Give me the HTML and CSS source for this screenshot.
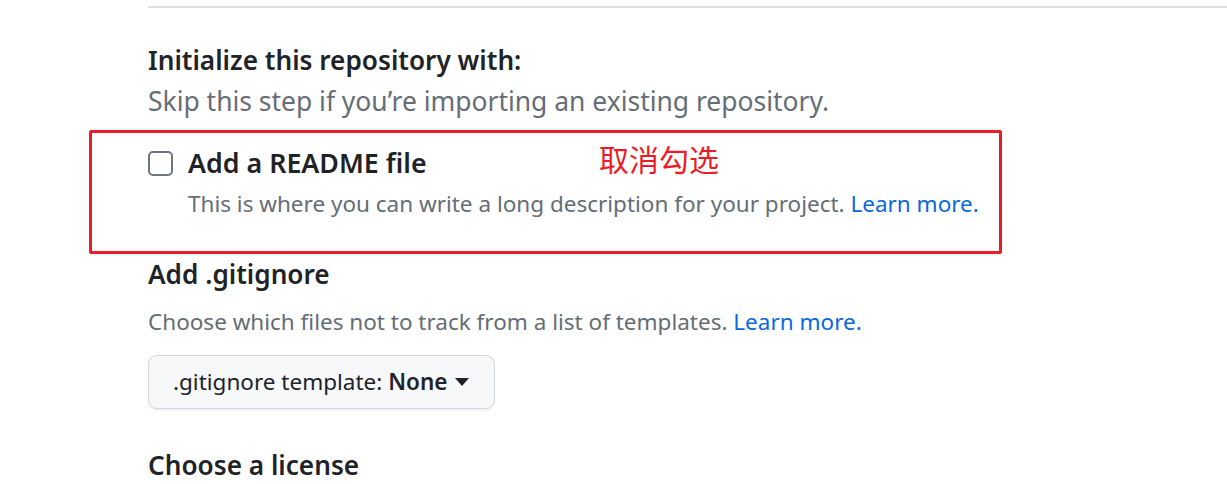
FILE: index.html
```html
<!DOCTYPE html>
<html lang="zh-CN">
<head>
<meta charset="utf-8">
<title>Initialize this repository</title>
<link rel="stylesheet" href="styles.css">
</head>
<body>
<div class="page">
  <hr class="rule">
  <h3 class="heading heading-first">Initialize this repository with:</h3>
  <p class="lead">Skip this step if you’re importing an existing repository.</p>

  <div class="annotated">
    <label class="check-row">
      <span class="checkbox"></span>
      <span class="check-label">Add a README file</span>
    </label>
    <p class="note note-indent">This is where you can write a long description for your project. <a class="link" href="#">Learn more.</a></p>
    <span class="annotation">取消勾选</span>
  </div>

  <h3 class="heading heading-gitignore">Add .gitignore</h3>
  <p class="note note-gitignore">Choose which files not to track from a list of templates. <a class="link" href="#">Learn more.</a></p>
  <button class="select-btn" type="button">.gitignore template: <strong class="select-value">None</strong><span class="caret"></span></button>

  <h3 class="heading heading-license">Choose a license</h3>
</div>
</body>
</html>
```
FILE: styles.css
```css
html, body {
  margin: 0;
  padding: 0;
  background: #ffffff;
}

body {
  font-family: "Noto Sans", "Open Sans", "Noto Sans CJK SC", sans-serif;
  color: #1f2328;
  overflow: hidden;
}

.page {
  padding: 6px 0 0 148px;
}

.rule {
  margin: 0;
  border: 0;
  border-top: 2px solid #dde1e5;
  height: 0;
}

.heading {
  margin: 0;
  font-size: 26.2px;
  font-weight: 600;
  line-height: 36px;
  color: #1f2328;
}

.heading-first {
  margin-top: 34px;
}

.lead {
  margin: 5px 0 0;
  font-size: 26.45px;
  line-height: 36px;
  color: #656d76;
}

.annotated {
  position: relative;
  box-sizing: border-box;
  margin: 11px 0 0 -59px;
  width: 913px;
  height: 124px;
  padding: 12px 0 0 56px;
  border: 3px solid #ec1c27;
  border-radius: 2px;
}

.check-row {
  display: flex;
  align-items: center;
  gap: 15px;
  height: 36px;
}

.checkbox {
  box-sizing: border-box;
  width: 25px;
  height: 25px;
  border: 2px solid #6e7781;
  border-radius: 5px;
  background: #ffffff;
  flex: none;
}

.check-label {
  font-size: 26.8px;
  font-weight: 600;
  line-height: 36px;
  color: #1f2328;
}

.note {
  margin: 0;
  font-size: 22.5px;
  line-height: 32px;
  color: #656d76;
}

.note-indent {
  margin-top: 7px;
  padding-left: 40px;
}

.link {
  color: #0969da;
  text-decoration: none;
}

.annotation {
  position: absolute;
  left: 507px;
  top: 10px;
  font-family: "Noto Sans CJK SC", sans-serif;
  font-size: 30px;
  line-height: 30px;
  color: #ec1c27;
  white-space: nowrap;
}

.heading-gitignore {
  margin-top: 2px;
}

.note-gitignore {
  margin-top: 14px;
}

.select-btn {
  display: inline-flex;
  align-items: center;
  box-sizing: border-box;
  height: 54px;
  margin-top: 17px;
  padding: 0 25px 0 24px;
  font-family: inherit;
  font-size: 22.5px;
  line-height: 32px;
  color: #1f2328;
  background: #f6f8fa;
  border: 1px solid #d0d7de;
  border-radius: 9px;
  box-shadow: 0 2px 0 rgba(31, 35, 40, 0.05);
  white-space: pre;
}

.select-value {
  font-weight: 600;
}

.caret {
  width: 0;
  height: 0;
  margin-left: 8px;
  border-left: 7px solid transparent;
  border-right: 7px solid transparent;
  border-top: 8px solid #1f2328;
}

.heading-license {
  margin-top: 38px;
}
```
